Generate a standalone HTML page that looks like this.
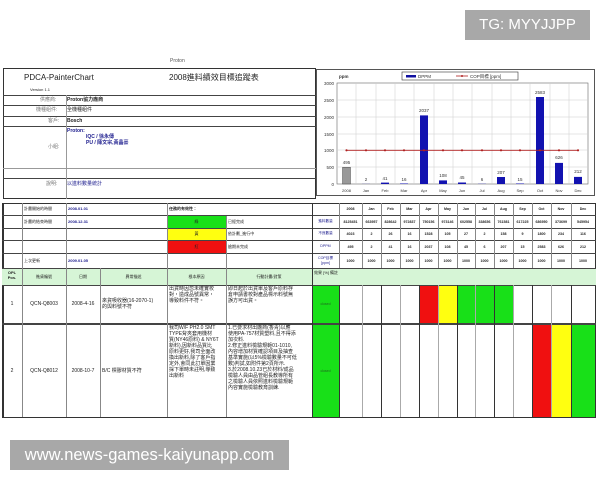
<!DOCTYPE html>
<html><head><meta charset="utf-8"><style>
body{margin:0;width:600px;height:480px;background:#fff;position:relative;overflow:hidden;font-family:"Liberation Sans","Noto Sans CJK TC",sans-serif;color:#222}
.a{position:absolute;box-sizing:border-box}
.t{position:absolute;font-size:5px;line-height:6px;white-space:nowrap}
.c{text-align:center}
.h{position:absolute;height:0;border-top:1px solid #444}
.v{position:absolute;width:0;border-left:1px solid #555}
.b{color:#1a1a8c}
</style></head><body>
<div class="t" style="left:170px;top:58px;font-size:5px;color:#555">Proton</div>

<!-- top left box -->
<div class="a" style="left:3px;top:68px;width:313px;height:131px;border:1px solid #333"></div>
<div class="t" style="left:24px;top:73px;font-size:8px;line-height:9px">PDCA-PainterChart</div>
<div class="t" style="left:30px;top:87px;font-size:4px">Version 1.1</div>
<div class="t" style="left:169px;top:73px;font-size:8px;line-height:9px">2008進料績效目標追蹤表</div>
<div class="h" style="left:3px;top:95px;width:313px"></div>
<div class="h" style="left:3px;top:105px;width:313px"></div>
<div class="h" style="left:3px;top:116px;width:313px"></div>
<div class="h" style="left:3px;top:126px;width:313px"></div>
<div class="h" style="left:3px;top:168px;width:313px;border-color:#999"></div>
<div class="h" style="left:3px;top:178px;width:313px"></div>
<div class="v" style="left:66px;top:95px;height:104px;border-color:#999"></div>
<div class="t" style="left:40px;top:97px;color:#777">供應商:</div><div class="t" style="left:67px;top:97px;font-weight:bold">Proton協力廠商</div>
<div class="t" style="left:36px;top:107px;color:#777">機種組件:</div><div class="t" style="left:67px;top:107px">全機種組件</div>
<div class="t" style="left:48px;top:118px;color:#777">客戶:</div><div class="t" style="left:67px;top:118px;font-weight:bold">Bosch</div>
<div class="t b" style="left:67px;top:128px;font-weight:bold">Proton:</div>
<div class="t b" style="left:86px;top:134px;font-weight:bold">IQC / 徐永傳</div>
<div class="t b" style="left:86px;top:140px;font-weight:bold">PU / 陳文宗,黃晶豪</div>
<div class="t" style="left:48px;top:144px;color:#777">小組:</div>
<div class="t" style="left:46px;top:181px;color:#777">說明:</div><div class="t b" style="left:67px;top:181px">以進料數量統計</div>

<!-- chart -->
<div class="a" style="left:316px;top:69px;width:279px;height:127px;border:1px solid #555"></div>
<svg class="a" style="left:0;top:0" width="600" height="200">
<g font-family="Liberation Sans" font-size="4.5" fill="#333">
<text x="339" y="78" font-weight="bold">ppm</text>
<rect x="402" y="72" width="116" height="8" fill="#fff" stroke="#333" stroke-width=".6"/>
<rect x="406" y="75" width="10" height="2.5" fill="#1010a0"/><text x="418" y="78">DPPM</text>
<line x1="456" y1="76" x2="468" y2="76" stroke="#b02020" stroke-width=".8"/><circle cx="462" cy="76" r="1" fill="#b02020"/><text x="470" y="78">COP目標 [ppm]</text>
<rect x="337" y="83" width="251" height="101" fill="#fff" stroke="#666" stroke-width=".6"/>
<g stroke="#ccc" stroke-width=".5">
<line x1="337" y1="100" x2="588" y2="100"/><line x1="337" y1="117" x2="588" y2="117"/><line x1="337" y1="134" x2="588" y2="134"/><line x1="337" y1="150" x2="588" y2="150"/><line x1="337" y1="167" x2="588" y2="167"/>
<line x1="356" y1="83" x2="356" y2="184"/><line x1="376" y1="83" x2="376" y2="184"/><line x1="395" y1="83" x2="395" y2="184"/><line x1="414" y1="83" x2="414" y2="184"/><line x1="434" y1="83" x2="434" y2="184"/><line x1="453" y1="83" x2="453" y2="184"/><line x1="472" y1="83" x2="472" y2="184"/><line x1="492" y1="83" x2="492" y2="184"/><line x1="511" y1="83" x2="511" y2="184"/><line x1="530" y1="83" x2="530" y2="184"/><line x1="550" y1="83" x2="550" y2="184"/><line x1="569" y1="83" x2="569" y2="184"/>
</g>
<g text-anchor="end"><text x="334" y="85">3000</text><text x="334" y="102">2500</text><text x="334" y="119">2000</text><text x="334" y="136">1500</text><text x="334" y="152">1000</text><text x="334" y="169">500</text><text x="334" y="186">0</text></g>
<rect x="342.5" y="167.3" width="8" height="16.7" fill="#999" stroke="#333" stroke-width=".4"/>
<g fill="#1212b0">
<rect x="362" y="183.9" width="8" height=".1"/><rect x="381" y="182.6" width="8" height="1.4"/><rect x="400" y="183.5" width="8" height=".5"/><rect x="420" y="115.4" width="8" height="68.6"/><rect x="439" y="180.4" width="8" height="3.6"/><rect x="458" y="182.5" width="8" height="1.5"/><rect x="478" y="183.8" width="8" height=".2"/><rect x="497" y="177" width="8" height="7"/><rect x="516" y="183.5" width="8" height=".5"/><rect x="536" y="97" width="8" height="87"/><rect x="555" y="162.9" width="8" height="21.1"/><rect x="574" y="176.9" width="8" height="7.1"/>
</g>
<g text-anchor="middle">
<text x="346.5" y="164">495</text><text x="366" y="181">2</text><text x="385" y="180">41</text><text x="404" y="181">16</text><text x="424" y="112">2037</text><text x="443" y="177">108</text><text x="462" y="179">45</text><text x="482" y="181">6</text><text x="501" y="174">207</text><text x="520" y="181">15</text><text x="540" y="94">2583</text><text x="559" y="159">626</text><text x="578" y="173">212</text>
</g>
<polyline points="346.5,150.3 366,150.3 385,150.3 404,150.3 424,150.3 443,150.3 462,150.3 482,150.3 501,150.3 520,150.3 540,150.3 559,150.3 578,150.3" fill="none" stroke="#b02020" stroke-width=".8"/>
<g fill="#b02020"><circle cx="346.5" cy="150.3" r="1.1"/><circle cx="366" cy="150.3" r="1.1"/><circle cx="385" cy="150.3" r="1.1"/><circle cx="404" cy="150.3" r="1.1"/><circle cx="424" cy="150.3" r="1.1"/><circle cx="443" cy="150.3" r="1.1"/><circle cx="462" cy="150.3" r="1.1"/><circle cx="482" cy="150.3" r="1.1"/><circle cx="501" cy="150.3" r="1.1"/><circle cx="520" cy="150.3" r="1.1"/><circle cx="540" cy="150.3" r="1.1"/><circle cx="559" cy="150.3" r="1.1"/><circle cx="578" cy="150.3" r="1.1"/></g>
<g text-anchor="middle" font-size="4"><text x="346.5" y="192">2008</text><text x="366" y="192">Jan</text><text x="385" y="192">Feb</text><text x="404" y="192">Mar</text><text x="424" y="192">Apr</text><text x="443" y="192">May</text><text x="462" y="192">Jun</text><text x="482" y="192">Jul</text><text x="501" y="192">Aug</text><text x="520" y="192">Sep</text><text x="540" y="192">Oct</text><text x="559" y="192">Nov</text><text x="578" y="192">Dec</text></g>
</g></svg>

<!-- lower table -->
<div class="a" style="left:2px;top:203px;width:594px;height:215px;border:1px solid #333;border-left-width:2px"></div>
<div class="a" style="left:2px;top:268px;width:594px;height:17px;background:#d6f5d6"></div>
<div class="a" style="left:167px;top:216px;width:59px;height:12px;background:#18e018"></div>
<div class="a" style="left:167px;top:228px;width:59px;height:12px;background:#ffff10"></div>
<div class="a" style="left:167px;top:240px;width:59px;height:13px;background:#f01010"></div>
<!-- row status -->
<div class="a" style="left:312px;top:285px;width:27px;height:38px;background:#18e018"></div>
<div class="a" style="left:312px;top:323px;width:27px;height:94px;background:#18e018"></div>
<div class="a" style="left:419px;top:285px;width:19px;height:38px;background:#f01010"></div>
<div class="a" style="left:438px;top:285px;width:19px;height:38px;background:#ffff10"></div>
<div class="a" style="left:457px;top:285px;width:56px;height:38px;background:#18e018"></div>
<div class="a" style="left:532px;top:323px;width:19px;height:94px;background:#f01010"></div>
<div class="a" style="left:551px;top:323px;width:20px;height:94px;background:#ffff10"></div>
<div class="a" style="left:571px;top:323px;width:24px;height:94px;background:#18e018"></div>

<!-- horizontal lines -->
<div class="h" style="left:2px;top:215px;width:594px"></div>
<div class="h" style="left:2px;top:228px;width:594px"></div>
<div class="h" style="left:2px;top:240px;width:594px"></div>
<div class="h" style="left:2px;top:253px;width:594px"></div>
<div class="h" style="left:2px;top:268px;width:594px"></div>
<div class="h" style="left:2px;top:285px;width:594px"></div>
<div class="h" style="left:2px;top:323px;width:594px;border-top-width:2px"></div>
<!-- vertical lines -->
<div class="v" style="left:22px;top:203px;height:214px;border-color:#888"></div>
<div class="v" style="left:66px;top:203px;height:214px;border-color:#888"></div>
<div class="v" style="left:100px;top:268px;height:149px;border-color:#888"></div>
<div class="v" style="left:167px;top:203px;height:214px;border-color:#888"></div>
<div class="v" style="left:226px;top:216px;height:201px;border-color:#888"></div>
<div class="v" style="left:312px;top:203px;height:214px;border-color:#333"></div>
<div class="v" style="left:339px;top:203px;height:65px;border-color:#888"></div>
<div class="v" style="left:339px;top:285px;height:132px;border-color:#333"></div>
<div id="mv"></div>

<!-- left text -->
<div class="t" style="left:24px;top:206px;font-size:4px">計畫開始的時間</div><div class="t b" style="left:68px;top:206px;font-size:4px;font-weight:bold">2008.01.01</div>
<div class="t" style="left:24px;top:219px;font-size:4px">計畫的結束時間</div><div class="t b" style="left:68px;top:219px;font-size:4px;font-weight:bold">2008.12.31</div>
<div class="t" style="left:169px;top:206px;font-size:4px;font-weight:bold">任務的有效性：</div>
<div class="t c" style="left:167px;top:219px;width:59px;font-size:4px">綠</div><div class="t" style="left:228px;top:219px;font-size:4px">已經完成</div>
<div class="t c" style="left:167px;top:231px;width:59px;font-size:4px">黃</div><div class="t" style="left:228px;top:231px;font-size:4px">依計劃_進行中</div>
<div class="t c" style="left:167px;top:244px;width:59px;font-size:4px">紅</div><div class="t" style="left:228px;top:244px;font-size:4px">逾期未完成</div>
<div class="t" style="left:24px;top:258px;font-size:4px">上次更新</div><div class="t b" style="left:68px;top:258px;font-size:4px;font-weight:bold">2009.01.05</div>
<div class="t c" style="left:2px;top:270px;width:20px;font-size:4px;line-height:5px;font-weight:bold">OPL<br>Pos.</div>
<div class="t c" style="left:22px;top:274px;width:44px;font-size:4px">進貨編號</div>
<div class="t c" style="left:66px;top:274px;width:34px;font-size:4px">日期</div>
<div class="t c" style="left:100px;top:274px;width:67px;font-size:4px">異常描述</div>
<div class="t c" style="left:167px;top:274px;width:59px;font-size:4px">根本原因</div>
<div class="t c" style="left:226px;top:274px;width:86px;font-size:4px">行動計畫/對策</div>
<div class="t" style="left:314px;top:270px;font-size:4px">效果 [%] 備註</div>

<div class="t c" style="left:2px;top:301px;width:20px">1</div>
<div class="t c" style="left:22px;top:301px;width:44px">QCN-Q8003</div>
<div class="t c" style="left:66px;top:301px;width:34px">2008-4-16</div>
<div class="t" style="left:102px;top:298px;line-height:6px">來貨吸收器(16-2070-1)<br>的與料號不符</div>
<div class="t" style="left:169px;top:286px;line-height:6px">出貨時因忽未確實校<br>對，造成品號異常，<br>導致料件不符。</div>
<div class="t" style="left:228px;top:286px;line-height:6px">即日起於出貨單及客戶原料存<br>倉申請書校對產品標示料號無<br>誤方可出貨。</div>
<div class="t c" style="left:312px;top:301px;width:27px;font-size:3.5px;color:#226622">closed</div>

<div class="t c" style="left:2px;top:368px;width:20px">2</div>
<div class="t c" style="left:22px;top:368px;width:44px">QCN-Q8012</div>
<div class="t c" style="left:66px;top:368px;width:34px">2008-10-7</div>
<div class="t" style="left:102px;top:368px">B/C 標膠材質不符</div>
<div class="t" style="left:169px;top:325px;line-height:6px">我司W/F PH2.0 SMT<br>TYPE背夾套用機材<br>質(NY46原料) &amp; NY6T<br>新料),因新料品質比<br>原料更好,我司全面改<br>換出新料,除了客戶指<br>定外,會同此訂單因業<br>採下單時未註明,導致<br>出新料</div>
<div class="t" style="left:228px;top:325px;line-height:6px">1.已要求材出廠商(香青)以應<br>使用PA-757材質塑料,且不得添<br>加次料.<br>2.修正進料檢驗規範01-1010,<br>內容增加材質確認項目及抽查<br>基準實施(以5%檢驗數量不可低<br>數)判試,如附件第2頁所示.<br>3.於2008.10.23已於材料/成品<br>檢驗人員由品管組長教導所有<br>之檢驗人員依照進料檢驗規範<br>內容實施檢驗教育訓練.</div>
<div class="t c" style="left:312px;top:368px;width:27px;font-size:3.5px;color:#226622">closed</div>

<!-- right numeric table -->
<div id="rt"></div>
<script>
var xs=[339,362,381,400,419,438,457,475,494,513,532,551,571,595];
var rows=[["2008","Jan","Feb","Mar","Apr","May","Jun","Jul","Aug","Sep","Oct","Nov","Dec"],
["8125451","663957","828642","972837","750156","973146","602558","338656","761581","617225","686950","373699","545954"],
["4023","2","26","16","1528","105","27","2","158","9","1800","234","116"],
["495","2","41","16","2037","108","45","6","207","15","2583","626","212"],
["1000","1000","1000","1000","1000","1000","1000","1000","1000","1000","1000","1000","1000"]];
var ys=[203,215,228,240,253,268];
var h="";
for(var i=1;i<13;i++){h+='<div class="v" style="left:'+xs[i]+'px;top:203px;height:65px;border-color:#888"></div>';
h+='<div class="v" style="left:'+xs[i]+'px;top:285px;height:132px;border-color:'+(i%2?'#aaa':'#333')+'"></div>';}
for(var r=0;r<5;r++)for(var i=0;i<13;i++){var y=(ys[r]+ys[r+1])/2-3;
h+='<div class="t c" style="left:'+xs[i]+'px;top:'+y+'px;width:'+(xs[i+1]-xs[i])+'px;font-size:3.6px;font-weight:bold">'+rows[r][i]+'</div>';}
var lb=["進料數量","不良數量","DPPM","COP目標<br>[ppm]"];
for(var r=0;r<4;r++){h+='<div class="t c b" style="left:312px;top:'+((ys[r+1]+ys[r+2])/2-(r==3?5:3))+'px;width:27px;font-size:3.6px;line-height:5px">'+lb[r]+'</div>';}
document.getElementById("rt").innerHTML=h;
</script>

<!-- watermarks -->
<div class="a" style="left:465px;top:10px;width:125px;height:30px;background:#a8a8a8;color:#fff;font-size:15px;line-height:30px;text-align:center">TG: MYYJJPP</div>
<div class="a" style="left:10px;top:440px;width:279px;height:30px;background:#a8a8a8;color:#fff;font-size:16.5px;line-height:30px;text-align:center">www.news-games-kaiyunapp.com</div>
</body></html>
